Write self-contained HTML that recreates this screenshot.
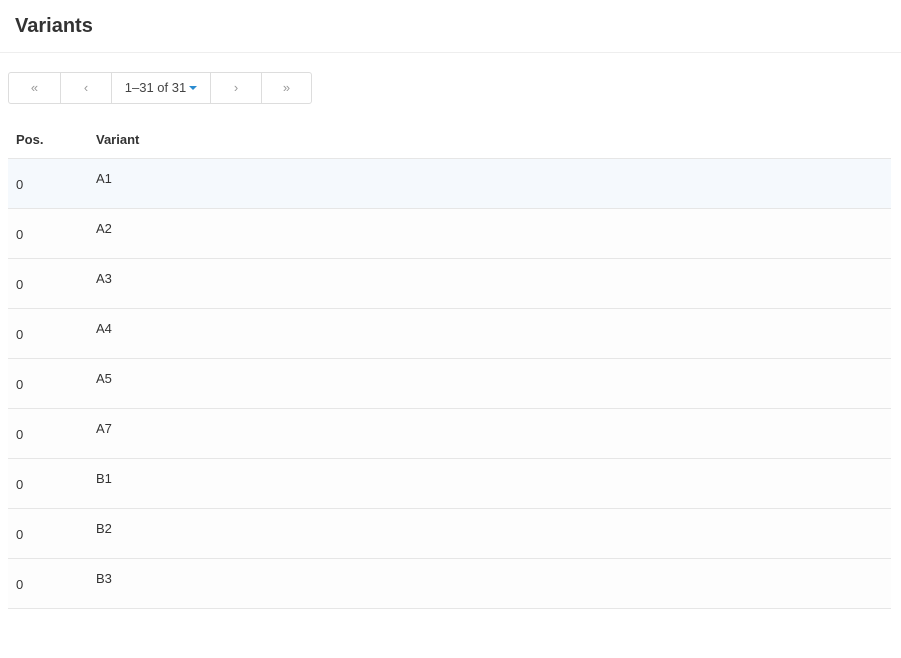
<!DOCTYPE html>
<html><head><style>
body{margin:0;width:901px;height:613px;overflow:hidden;background:#fff;font-family:"Liberation Sans",sans-serif;color:#333;}
.title{position:absolute;left:15px;top:15px;font-size:20px;font-weight:bold;color:#333;}
.hr{position:absolute;left:0;top:52px;width:901px;height:1px;background:#eee;}
.pag{position:absolute;left:8px;top:72px;height:30px;width:302px;border:1px solid #ddd;border-radius:3px;display:flex;}
.pag div{height:30px;line-height:30px;text-align:center;font-size:13px;color:#999;border-left:1px solid #ddd;box-sizing:border-box;}
.pag div:first-child{border-left:none}
.pag .mid{color:#444;}
.car{display:inline-block;width:0;height:0;border-left:4px solid transparent;border-right:4px solid transparent;border-top:4px solid #2a8bd0;vertical-align:middle;margin-left:3px;margin-top:-2px}
.th{position:absolute;top:132px;font-size:13px;font-weight:bold;color:#333}
.row{position:absolute;left:8px;width:883px;height:49px;border-top:1px solid #e6e6e6;background:#fdfdfd;font-size:13px;}
.row .a{position:absolute;left:8px;top:18px}
.row .b{position:absolute;left:88px;top:12px}
</style></head><body>
<div class="title">Variants</div>
<div class="hr"></div>
<div class="pag">
<div style="width:51px">&#171;</div>
<div style="width:51px">&#8249;</div>
<div class="mid" style="width:99px">1–31 of 31<span class="car"></span></div>
<div style="width:51px">&#8250;</div>
<div style="width:50px">&#187;</div>
</div>
<div class="th" style="left:16px">Pos.</div>
<div class="th" style="left:96px">Variant</div>
<div class="row" style="top:158px;background:#f5f9fd"><span class="a">0</span><span class="b">A1</span></div>
<div class="row" style="top:208px"><span class="a">0</span><span class="b">A2</span></div>
<div class="row" style="top:258px"><span class="a">0</span><span class="b">A3</span></div>
<div class="row" style="top:308px"><span class="a">0</span><span class="b">A4</span></div>
<div class="row" style="top:358px"><span class="a">0</span><span class="b">A5</span></div>
<div class="row" style="top:408px"><span class="a">0</span><span class="b">A7</span></div>
<div class="row" style="top:458px"><span class="a">0</span><span class="b">B1</span></div>
<div class="row" style="top:508px"><span class="a">0</span><span class="b">B2</span></div>
<div class="row" style="top:558px"><span class="a">0</span><span class="b">B3</span></div>
<div class="row" style="top:608px;background:#fff"></div>
</body></html>
